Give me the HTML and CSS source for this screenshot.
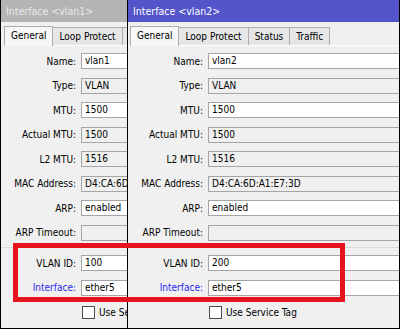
FILE: index.html
```html
<!DOCTYPE html>
<html>
<head>
    <title>Interface vlan1 / vlan2</title>
    <meta name="viewport" content="width=device-width, initial-scale=1">
    <link rel="stylesheet" href="styles.css">
</head>
<body>
    <div class="screen">
        <div class="win win-back">
            <div class="title">Interface &lt;vlan1&gt;</div>
            <div class="tabs">
                <div class="tab active">General</div>
                <div class="tab">Loop Protect</div>
                <div class="tab">Status</div>
                <div class="tab">Traffic</div>
            </div>
            <div class="form">
                <div class="section">
                    <div class="row"><span class="label">Name:</span><span class="field">vlan1</span></div>
                    <div class="row"><span class="label">Type:</span><span class="field ro">VLAN</span></div>
                    <div class="row"><span class="label">MTU:</span><span class="field">1500</span></div>
                    <div class="row"><span class="label">Actual MTU:</span><span class="field ro">1500</span></div>
                    <div class="row"><span class="label">L2 MTU:</span><span class="field ro">1516</span></div>
                    <div class="row"><span class="label">MAC Address:</span><span class="field ro">D4:CA:6D:A1:E7:3C</span></div>
                    <div class="row"><span class="label">ARP:</span><span class="field">enabled</span></div>
                    <div class="row"><span class="label">ARP Timeout:</span><span class="field ro"></span></div>
                </div>
                <div class="section">
                    <div class="row"><span class="label">VLAN ID:</span><span class="field">100</span></div>
                    <div class="row"><span class="label link">Interface:</span><span class="field">ether5</span></div>
                    <div class="row"><span class="label"></span><span class="check"></span><span class="check-text">Use Service Tag</span></div>
                </div>
            </div>
        </div>

        <div class="win win-front">
            <div class="title">Interface &lt;vlan2&gt;</div>
            <div class="tabs">
                <div class="tab active">General</div>
                <div class="tab">Loop Protect</div>
                <div class="tab">Status</div>
                <div class="tab">Traffic</div>
            </div>
            <div class="form">
                <div class="section">
                    <div class="row"><span class="label">Name:</span><span class="field">vlan2</span></div>
                    <div class="row"><span class="label">Type:</span><span class="field ro">VLAN</span></div>
                    <div class="row"><span class="label">MTU:</span><span class="field">1500</span></div>
                    <div class="row"><span class="label">Actual MTU:</span><span class="field ro">1500</span></div>
                    <div class="row"><span class="label">L2 MTU:</span><span class="field ro">1516</span></div>
                    <div class="row"><span class="label">MAC Address:</span><span class="field ro">D4:CA:6D:A1:E7:3D</span></div>
                    <div class="row"><span class="label">ARP:</span><span class="field">enabled</span></div>
                    <div class="row"><span class="label">ARP Timeout:</span><span class="field ro"></span></div>
                </div>
                <div class="section">
                    <div class="row"><span class="label">VLAN ID:</span><span class="field">200</span></div>
                    <div class="row"><span class="label link">Interface:</span><span class="field">ether5</span></div>
                    <div class="row"><span class="label"></span><span class="check"></span><span class="check-text">Use Service Tag</span></div>
                </div>
            </div>
        </div>

        <!-- red annotation box over both windows -->
        <div class="highlight"></div>
    </div>
</body>
</html>
```

FILE: styles.css
```css
body {
    margin: 0;
    font-family: "DejaVu Sans Condensed", "DejaVu Sans", sans-serif;
    font-stretch: condensed;
    font-size: 10px;
    color: #000;
}
.screen {
    position: relative;
    width: 400px;
    height: 329px;
    box-sizing: border-box;
    display: flex;
    background: #f0f0f0;
    border-left: 1px solid #000;
    border-right: 1px solid #000;
    border-bottom: 1px solid #000;
    overflow: hidden;
}
.win {
    display: flex;
    flex-direction: column;
    overflow: hidden;
    background: #f0f0f0;
}
.win-back {
    flex: none;
    width: 126px;
}
.win-front {
    flex: 1;
    border-left: 1px solid #000;
}
.title {
    height: 22px;
    line-height: 22px;
    padding-left: 5px;
    font-size: 10.5px;
    white-space: nowrap;
}
.win-back .title {
    background: #b4b4b4;
    color: #e9e9e9;
}
.win-front .title {
    background: #5454cb;
    color: #fff;
}
.tabs {
    display: flex;
    align-items: flex-end;
    height: 23px;
    padding-left: 4px;
    border-bottom: 1px solid #fff;
    white-space: nowrap;
}
.win-front .tabs {
    padding-left: 3px;
}
.tab {
    height: 17px;
    line-height: 17px;
    padding: 0 6px;
    background: #e6e6e6;
    border: 1px solid #acacac;
    border-bottom: none;
    margin-left: -1px;
}
.tab.active {
    height: 19px;
    line-height: 18px;
    background: #f7f7f7;
    position: relative;
    z-index: 1;
    margin-bottom: -1px;
}
.form {
    padding-top: 7px;
}
.section {
    display: flex;
    flex-direction: column;
    gap: 8.5px;
}
.section + .section {
    margin-top: 6px;
    padding-top: 7.5px;
    border-top: 1px solid #dadada;
}
.row {
    display: flex;
    align-items: center;
    height: 16px;
    white-space: nowrap;
}
.label {
    flex: none;
    width: 75px;
    margin-right: 5px;
    text-align: right;
}
.label.link {
    color: #2a2af0;
}
.field {
    flex: none;
    box-sizing: border-box;
    width: 240px;
    height: 16px;
    line-height: 14px;
    padding-left: 3px;
    border: 1px solid #a5a5a5;
    background: #fff;
}
.field.ro {
    background: #f0f0f0;
}
.check {
    flex: none;
    box-sizing: border-box;
    width: 13px;
    height: 13px;
    margin-left: 1px;
    border: 1px solid #4d4d4d;
    background: #fff;
}
.check-text {
    margin-left: 4px;
}
.highlight {
    position: absolute;
    left: 12px;
    top: 243px;
    width: 332px;
    height: 59px;
    box-sizing: border-box;
    border: 5px solid #e4141e;
}
```
